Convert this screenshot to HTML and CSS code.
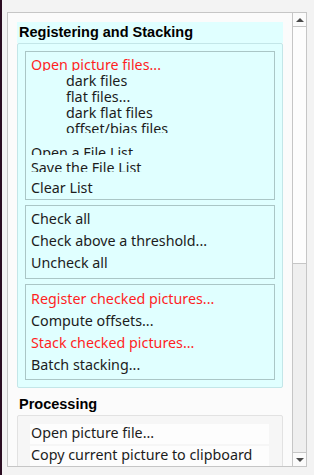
FILE: index.html
```html
<!DOCTYPE html>
<html lang="en">
<head>
  <meta charset="UTF-8" />
  <meta name="viewport" content="width=device-width, initial-scale=1.0" />
  <title>Registering and Stacking</title>
  <link rel="stylesheet" href="styles.css">
</head>
<body>
  <div class="frame">
    <div class="content">

      <section class="section">
        <div class="section-title cyan">Registering and Stacking</div>
        <div class="panel cyan">
          <div class="group files">
            <div class="item red first">Open picture files...</div>
            <div class="item sub">dark files</div>
            <div class="item sub">flat files...</div>
            <div class="item sub">dark flat files</div>
            <div class="item sub last">offset/bias files</div>
            <div class="item list-open">Open a File List</div>
            <div class="item list-save">Save the File List</div>
            <div class="item list-clear">Clear List</div>
          </div>

          <div class="group checks">
            <div class="line">Check all</div>
            <div class="line">Check above a threshold...</div>
            <div class="line">Uncheck all</div>
          </div>

          <div class="group stacking">
            <div class="line red">Register checked pictures...</div>
            <div class="line">Compute offsets...</div>
            <div class="line red">Stack checked pictures...</div>
            <div class="line">Batch stacking...</div>
          </div>
        </div>
      </section>

      <section class="section processing">
        <div class="section-title">Processing</div>
        <div class="panel plain">
          <div class="row">Open picture file...</div>
          <div class="row">Copy current picture to clipboard</div>
        </div>
      </section>

    </div>

    <div class="scrollbar">
      <div class="sb-btn up"><span class="arrow-up"></span></div>
      <div class="sb-thumb"></div>
      <div class="sb-track"></div>
      <div class="sb-btn down"><span class="arrow-down"></span></div>
    </div>
  </div>
</body>
</html>
```

FILE: styles.css
```css
body {
  margin: 0;
  height: 475px;
  background: #f3f3f3;
  border-left: 2px solid #2b0d22;
  font-family: 'Noto Sans', 'DejaVu Sans', sans-serif;
  font-size: 14.3px;
  color: #1c1c1c;
  overflow: hidden;
}

.frame {
  display: flex;
  width: 298px;
  height: 453px;
  margin: 12px 0 0 5px;
  border: 1px solid #c6c6c6;
  background: #fbfbfb;
}

.content {
  flex: 1;
  overflow: hidden;
  padding: 9px 9px 0 9px;
}

/* sections */

.section-title {
  height: 21px;
  line-height: 21px;
  padding-left: 2px;
  font-family: 'Liberation Sans', Arial, sans-serif;
  font-size: 14.5px;
  font-weight: 700;
  color: #000;
}

.cyan {
  background: #e0ffff;
}

.panel {
  border: 1px solid #c3e6e8;
  padding: 7px;
  border-radius: 2px;
}

.group {
  border: 1px solid #aac6c6;
  padding-left: 5px;
}

.group + .group {
  margin-top: 5px;
}

.red {
  color: #ff1f1f;
}

/* first group: squeezed rows, clipped like the real widgets */

.files {
  padding-top: 3px;
  padding-bottom: 6px;
}

.item {
  line-height: 20px;
  overflow: hidden;
  white-space: nowrap;
}

.item.first { height: 16px; }

.item.sub {
  height: 15px;
  margin-bottom: 1px;
  padding-left: 35px;
}

.item.sub.last {
  height: 14px;
  margin-bottom: 0;
}

.list-open {
  height: 12px;
  margin-top: 10px;
}

.list-save {
  height: 14px;
  margin-top: 3px;
}

.list-clear {
  height: 15px;
  margin-top: 6px;
}

/* other groups */

.line {
  height: 22px;
  line-height: 22px;
  white-space: nowrap;
}

.checks {
  padding-top: 2px;
  padding-bottom: 4px;
}

.stacking {
  padding-top: 3px;
  padding-bottom: 3px;
}

/* processing */

.processing {
  margin-top: 6px;
}

.panel.plain {
  background: #f6f6f6;
  border-color: #e2e2e2;
  padding: 8px 13px 0 12px;
}

.row {
  height: 20px;
  line-height: 18px;
  margin-bottom: 2px;
  padding-left: 1px;
  background: #fdfdfd;
  white-space: nowrap;
}

/* scrollbar */

.scrollbar {
  width: 13px;
  border-left: 1px solid #c6c6c6;
  display: flex;
  flex-direction: column;
}

.sb-btn {
  height: 13px;
  display: flex;
  justify-content: center;
  align-items: center;
  background: #fbfbfb;
}

.sb-btn.up { border-bottom: 1px solid #c6c6c6; }
.sb-btn.down { border-top: 1px solid #c6c6c6; }

.arrow-up,
.arrow-down {
  width: 0;
  height: 0;
  border-left: 4px solid transparent;
  border-right: 4px solid transparent;
}

.arrow-up { border-bottom: 4px solid #4a4a4a; }
.arrow-down { border-top: 4px solid #4a4a4a; }

.sb-thumb {
  height: 236px;
  background: #fdfdfd;
  border-bottom: 1px solid #c6c6c6;
}

.sb-track {
  flex: 1;
  background: #efefef;
}
```
